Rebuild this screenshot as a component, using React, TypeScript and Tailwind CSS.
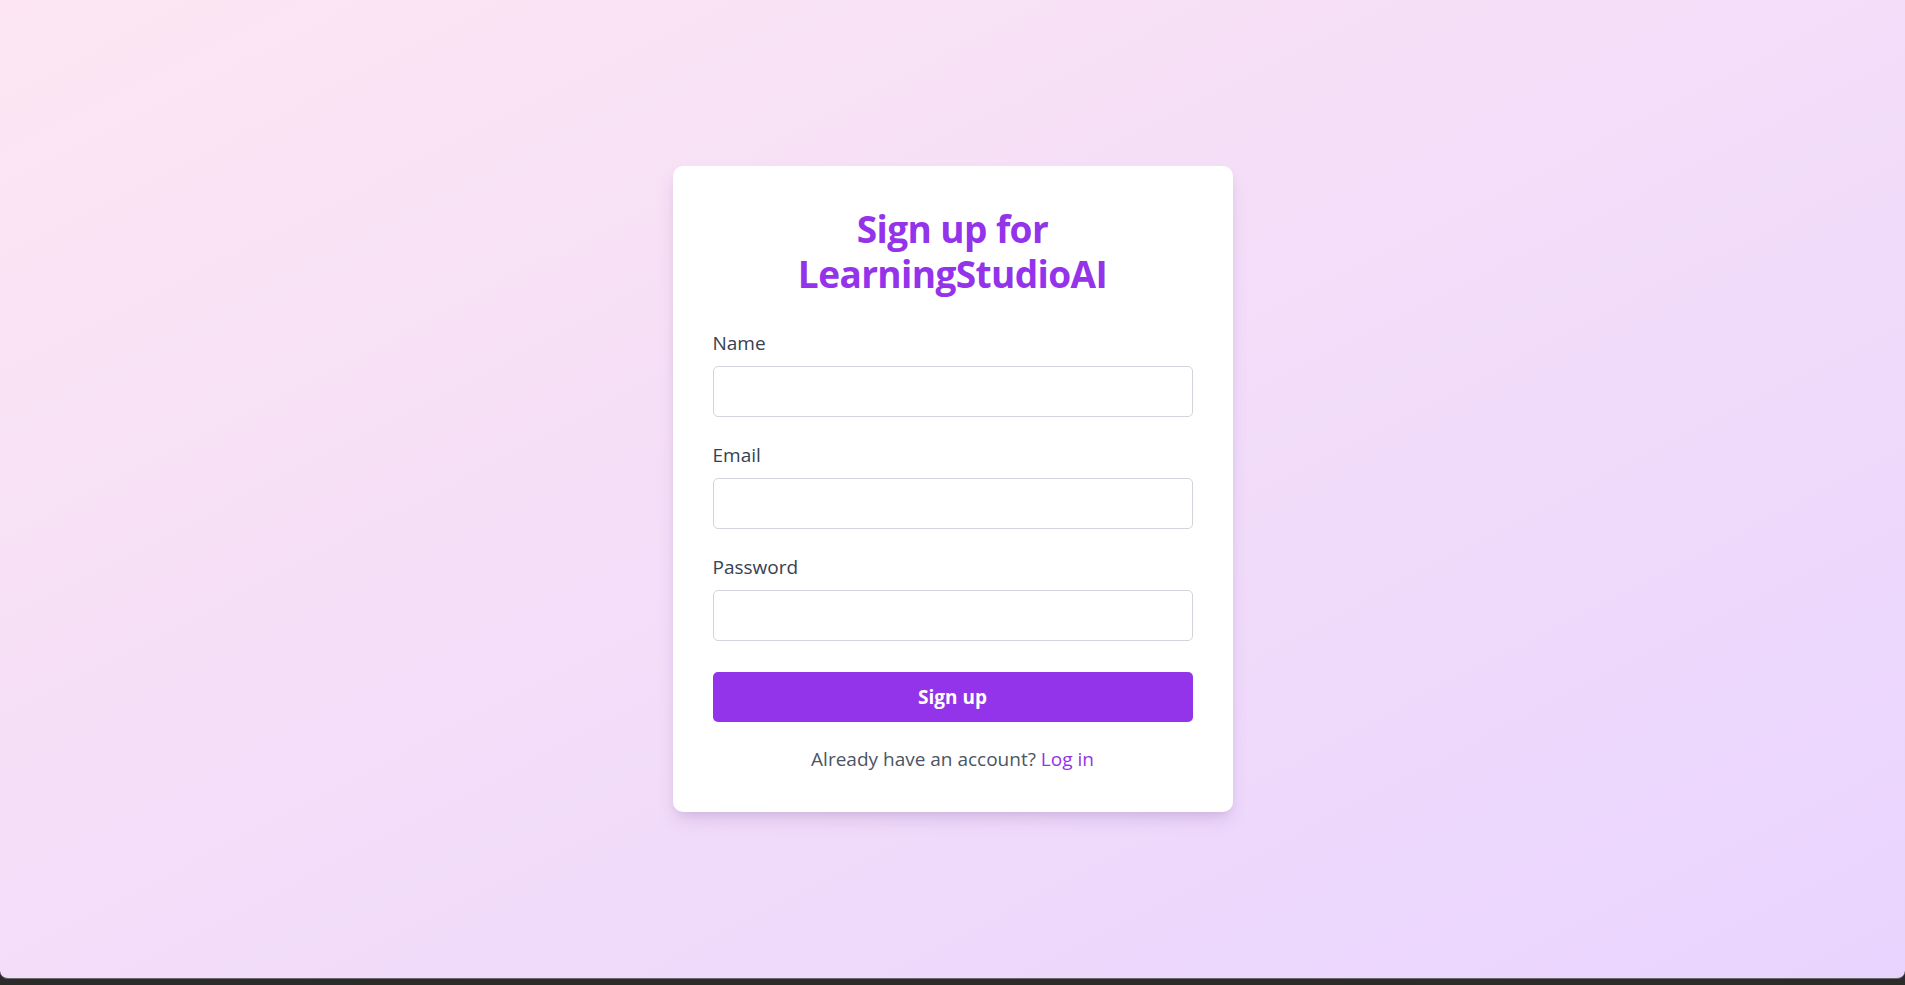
import React from "react";

const fields = [
  { label: "Name", type: "text" },
  { label: "Email", type: "email" },
  { label: "Password", type: "password" },
];

const App = () => {
  return (
    <div className="w-full h-[985px] bg-[#2b2b2b] font-['Open_Sans',sans-serif]">
      {/* page area */}
      <main className="w-full h-[979px] rounded-b-[8px] border-b border-[#6b6b6b] bg-linear-to-br from-[#fde6f2] to-[#e9d4ff] flex items-center justify-center">
        <div className="w-[560px] bg-white rounded-[10px] shadow-[0_10px_18px_-4px_rgba(120,80,150,0.22),0_4px_8px_-4px_rgba(120,80,150,0.15)] px-10 pt-10 pb-[38px]">
          <h1 className="text-center text-[#9333ea] font-bold text-[37px] leading-[45px] tracking-[-0.6px] px-[40px] mb-[30px]">
            Sign up for LearningStudioAI
          </h1>
          <form onSubmit={(e) => e.preventDefault()}>
            {fields.map((f, i) => (
              <div key={f.label} className={i === fields.length - 1 ? "mb-[31px]" : "mb-[21px]"}>
                <label className="block text-[19px] leading-[30px] text-[#374151] pt-[2px] mb-[8px]">
                  {f.label}
                </label>
                <input
                  type={f.type}
                  className="block w-full h-[51px] border border-[#d1d5db] rounded-[5px] px-3 outline-none"
                />
              </div>
            ))}
            <button
              type="submit"
              className="w-full h-[50px] bg-[#9333ea] text-white font-bold text-[19px] rounded-[5px]"
            >
              Sign up
            </button>
          </form>
          <p className="mt-[20px] pt-[2px] text-center text-[19px] leading-[30px] text-[#4b5563]">
            Already have an account? <a className="text-[#9333ea]">Log in</a>
          </p>
        </div>
      </main>
    </div>
  );
};

export default App;
